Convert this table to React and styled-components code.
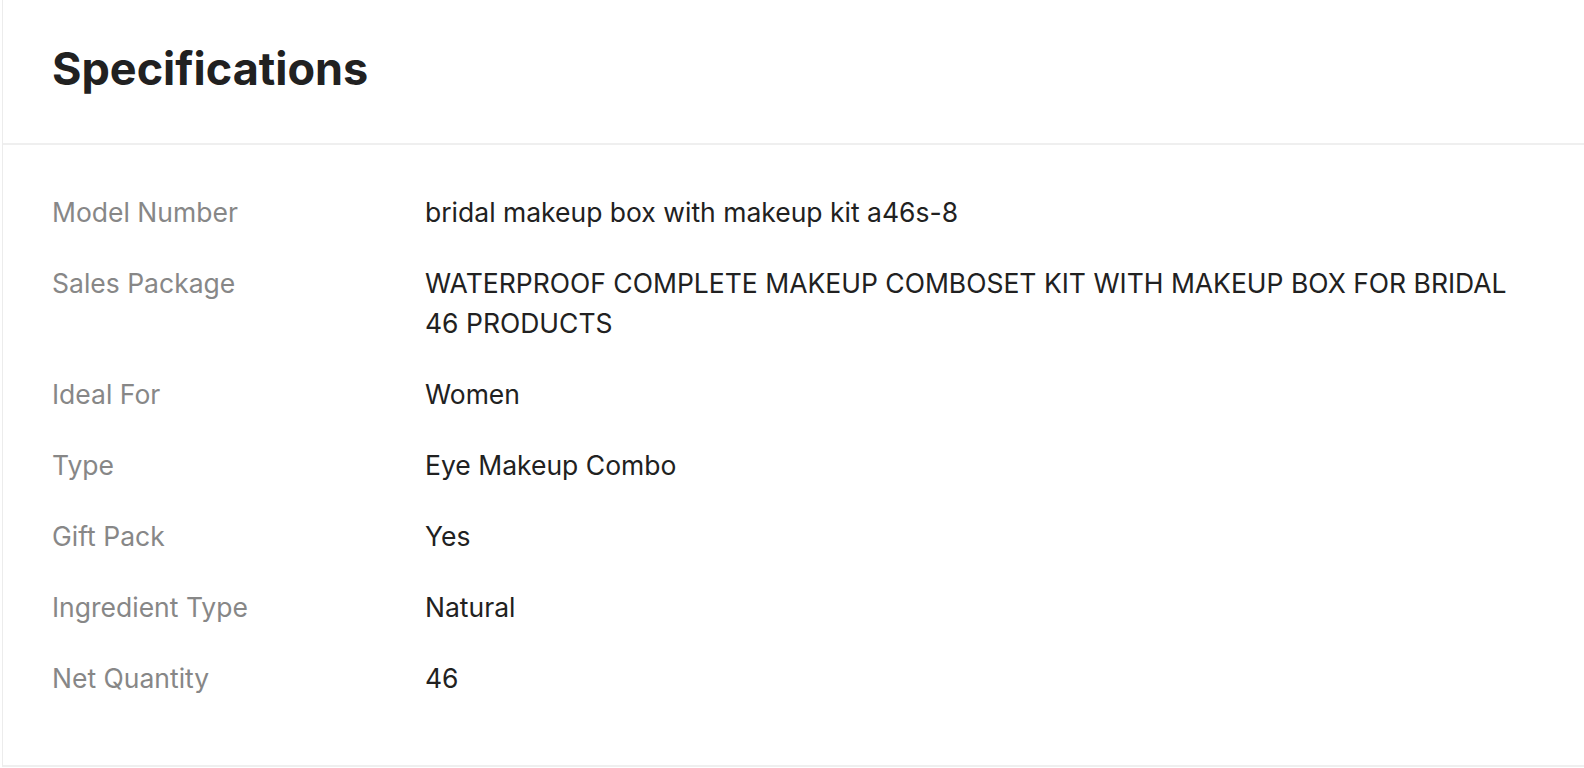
import React from "react";
import styled, {createGlobalStyle} from "styled-components";

const specs = [
  {label: "Model Number", value: "bridal makeup box with makeup kit a46s-8"},
  {label: "Sales Package", value: "WATERPROOF COMPLETE MAKEUP COMBOSET KIT WITH MAKEUP BOX FOR BRIDAL 46 PRODUCTS"},
  {label: "Ideal For", value: "Women"},
  {label: "Type", value: "Eye Makeup Combo"},
  {label: "Gift Pack", value: "Yes"},
  {label: "Ingredient Type", value: "Natural"},
  {label: "Net Quantity", value: "46"},
];

const App = () => {
  return (
    <>
      <GlobalStyle/>
      <Card>
        <Header>
          <Title>Specifications</Title>
        </Header>
        <Body>
          {specs.map((s) => (
            <Row key={s.label}>
              <Label>{s.label}</Label>
              <Value>{s.value}</Value>
            </Row>
          ))}
        </Body>
      </Card>
    </>
  );
};

export default App;

const GlobalStyle = createGlobalStyle`
  body {
    margin: 0;
    background: #fff;
    font-family: Inter, "Noto Sans", sans-serif;
  }
`

const Card = styled.section`
  margin-left: 2px;
  border-left: 1px solid #ececec;
  border-bottom: 2px solid #efefef;
  background: #fff;
`

const Header = styled.div`
  height: 136px;
  display: flex;
  align-items: center;
  padding: 0 49px 7px;
  border-bottom: 2px solid #efefef;
`

const Title = styled.h2`
  margin: 0;
  font-size: 45px;
  font-weight: 700;
  color: #212121;
`

const Body = styled.div`
  display: flex;
  flex-direction: column;
  gap: 31px;
  padding: 47px 49px 67px;
`

const Row = styled.div`
  display: grid;
  grid-template-columns: 373px 1fr;
  font-size: 26.5px;
  line-height: 40px;
`

const Label = styled.div`
  color: #878787;
`

const Value = styled.div`
  color: #212121;
`
